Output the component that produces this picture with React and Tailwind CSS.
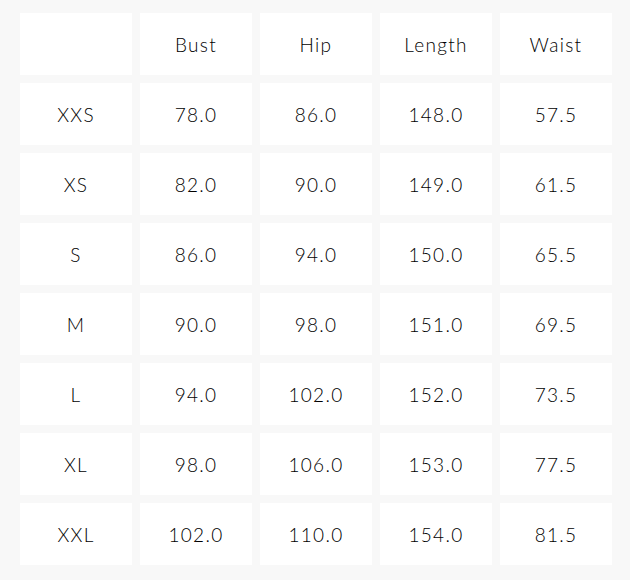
import React from "react";

const headers = ["", "Bust", "Hip", "Length", "Waist"];

const rows = [
    ["XXS", "78.0", "86.0", "148.0", "57.5"],
    ["XS", "82.0", "90.0", "149.0", "61.5"],
    ["S", "86.0", "94.0", "150.0", "65.5"],
    ["M", "90.0", "98.0", "151.0", "69.5"],
    ["L", "94.0", "102.0", "152.0", "73.5"],
    ["XL", "98.0", "106.0", "153.0", "77.5"],
    ["XXL", "102.0", "110.0", "154.0", "81.5"],
];

const Cell = ({ children }) => (
    <div className="h-[62px] bg-white flex items-center justify-center pt-[2px] text-[19px] font-light tracking-[1.3px] text-[#000]">
        {children}
    </div>
);

const App = () => {
    return (
        <div
            className="w-[630px] h-[580px] bg-[#f8f8f8] pt-[13px] pl-[20px]"
            style={{ fontFamily: "Lato, 'Noto Sans', sans-serif" }}
        >
            <div className="grid grid-cols-[repeat(5,112px)] gap-[8px]">
                {headers.map((h, i) => (
                    <Cell key={i}>{h}</Cell>
                ))}
                {rows.map((row) =>
                    row.map((v, j) => <Cell key={row[0] + j}>{v}</Cell>)
                )}
            </div>
        </div>
    );
};

export default App;
